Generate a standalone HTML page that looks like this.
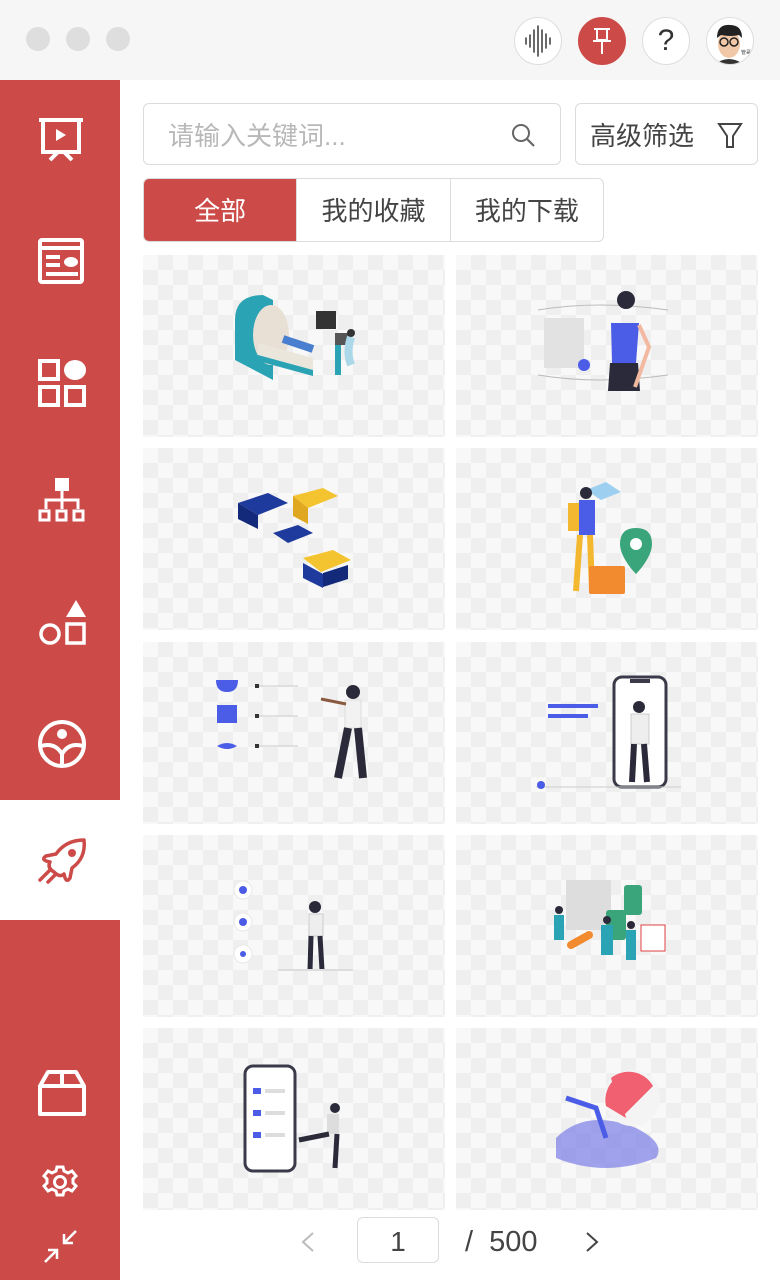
<!DOCTYPE html>
<html><head><meta charset="utf-8"><style>
*{margin:0;padding:0;box-sizing:border-box}
body{width:780px;height:1280px;background:#fff;font-family:"Liberation Sans","Noto Sans CJK SC",sans-serif;position:relative;overflow:hidden}
.top{position:absolute;left:0;top:0;width:780px;height:80px;background:#f6f6f6}
.dot{position:absolute;top:27px;width:24px;height:24px;border-radius:50%;background:#dedede}
.cb{position:absolute;top:17px;width:48px;height:48px;border-radius:50%;background:#fff;border:1px solid #ddd}
.side{position:absolute;left:0;top:80px;width:120px;height:1200px;background:#cc4b48}
.act{position:absolute;left:0;top:800px;width:120px;height:120px;background:#fff}
.ic{position:absolute;left:36px}
.search{position:absolute;left:143px;top:103px;width:418px;height:62px;border:1.5px solid #dcdcdc;border-radius:6px;color:#b8b8b8;font-size:26px;line-height:64px;padding-left:24px}
.filter{position:absolute;left:575px;top:103px;width:183px;height:62px;border:1.5px solid #dcdcdc;border-radius:6px;color:#444;font-size:26px;line-height:64px;padding-left:14px}
.tabs{position:absolute;left:143px;top:178px;width:461px;height:64px;border:1.5px solid #dcdcdc;border-radius:6px;overflow:hidden;display:flex}
.tabs div{flex:1;text-align:center;line-height:64px;font-size:26px;color:#444;border-left:1.5px solid #dcdcdc}
.tabs div:first-child{background:#cc4b48;color:#fff;border:none}
.card{position:absolute;width:302px;height:182px;background-color:#f8f8f8;background-image:linear-gradient(45deg,#efefef 25%,transparent 25%,transparent 75%,#efefef 75%),linear-gradient(45deg,#efefef 25%,transparent 25%,transparent 75%,#efefef 75%);background-size:30px 30px;background-position:0 0,15px 15px}
.card svg{position:absolute;left:0;top:0}
.pg{position:absolute;top:1222px;font-size:29px;color:#444;line-height:40px}
</style></head><body>
<div class="top">
<div class="dot" style="left:26px"></div><div class="dot" style="left:66px"></div><div class="dot" style="left:106px"></div>
<div class="cb" style="left:514px"><svg width="46" height="46"><g stroke="#444" stroke-width="1.6" stroke-linecap="round"><line x1="11" y1="20" x2="11" y2="26"/><line x1="15" y1="17" x2="15" y2="29"/><line x1="19" y1="12" x2="19" y2="34"/><line x1="23" y1="8" x2="23" y2="38"/><line x1="27" y1="12" x2="27" y2="34"/><line x1="31" y1="16" x2="31" y2="30"/><line x1="35" y1="20" x2="35" y2="26"/></g></svg></div>
<div class="cb" style="left:578px;background:#cc4b48;border-color:#cc4b48"><svg width="46" height="46"><g stroke="#fff" stroke-width="2" fill="none"><path d="M15 11h16M18 11v11h10V11M14 23h18M23 23v13"/></g></svg></div>
<div class="cb" style="left:642px;font-size:30px;color:#333;text-align:center;line-height:46px">?</div>
<div class="cb" style="left:706px;overflow:hidden"><svg width="46" height="46"><ellipse cx="22" cy="26" rx="11" ry="14" fill="#f2c9a8"/><path d="M10 20q0-14 13-13q12 0 12 13l-3-3q-8 2-18 0z" fill="#222"/><circle cx="17" cy="24" r="4" fill="none" stroke="#222" stroke-width="1.5"/><circle cx="27" cy="24" r="4" fill="none" stroke="#222" stroke-width="1.5"/><path d="M8 46q14-10 28 0z" fill="#333"/><text x="34" y="36" font-size="5" fill="#333">管哥</text></svg></div>
</div>
<div class="side"></div>
<div class="act"></div>
<svg class="ic" style="top:116px" width="50" height="52"><g stroke="#fff" stroke-width="4" fill="none"><path d="M3 4h44M7 4v32h36V4M14 44l8-8M36 44l-8-8"/></g><path d="M20 13l10 6-10 6z" fill="#fff"/></svg>
<svg class="ic" style="top:236px" width="50" height="50"><g stroke="#fff" stroke-width="4" fill="none"><rect x="4" y="4" width="42" height="42" rx="2"/><path d="M4 12h42M10 21h14M10 29h14M10 38h32"/></g><ellipse cx="35" cy="26" rx="7" ry="5" fill="#fff"/></svg>
<svg class="ic" style="top:356px" width="52" height="52"><g stroke="#fff" stroke-width="4" fill="none"><rect x="4" y="5" width="18" height="18"/><rect x="4" y="31" width="18" height="18"/><rect x="30" y="31" width="18" height="18"/></g><ellipse cx="39" cy="14" rx="11" ry="10" fill="#fff"/></svg>
<svg class="ic" style="top:476px" width="52" height="52"><rect x="19" y="2" width="14" height="13" fill="#fff"/><g stroke="#fff" stroke-width="3" fill="none"><path d="M26 15v8M10 33v-9h32v9M26 24v9"/><rect x="4" y="35" width="9" height="9"/><rect x="21" y="35" width="9" height="9"/><rect x="38" y="35" width="9" height="9"/></g></svg>
<svg class="ic" style="top:596px" width="52" height="52"><path d="M40 4l10 17H30z" fill="#fff"/><g stroke="#fff" stroke-width="3.5" fill="none"><circle cx="14" cy="38" r="9"/><rect x="31" y="28" width="17" height="19"/></g></svg>
<svg class="ic" style="top:718px" width="52" height="52"><g stroke="#fff" stroke-width="4" fill="none"><circle cx="26" cy="26" r="22"/><path d="M5 28q14-4 21 8q7-12 21-8M26 36v11"/></g><circle cx="26" cy="16" r="5" fill="#fff"/></svg>
<svg class="ic" style="top:836px" width="54" height="54"><g stroke="#cc4b48" stroke-width="3.5" fill="none" stroke-linecap="round" stroke-linejoin="round"><path d="M48 4q-18 0-28 14l-10 2q-6 4 4 6q-3 6 4 10q6 6 10 2q2 10 6 4l2-10q14-10 12-28z"/><path d="M8 40l6-6M12 46l8-8M4 44l3-3"/></g><circle cx="36" cy="17" r="4" fill="#cc4b48"/></svg>
<svg class="ic" style="top:1068px" width="52" height="52"><g stroke="#fff" stroke-width="4" fill="none" stroke-linejoin="round"><path d="M4 18l8-14h28l8 14v28H4zM4 18h44M26 4v14"/></g></svg>
<svg class="ic" style="top:1164px;left:42px" width="38" height="38"><g stroke="#fff" stroke-width="3" fill="none"><circle cx="18" cy="18" r="5.5"/><path d="M15 3h6l1 4 4 2 4-2 4 5-3 3v4l3 3-4 5-4-2-4 2-1 4h-6l-1-4-4-2-4 2-4-5 3-3v-4l-3-3 4-5 4 2 4-2z"/></g></svg>
<svg class="ic" style="top:1228px;left:42px" width="38" height="38"><g stroke="#fff" stroke-width="2.5" fill="none"><path d="M34 3L22 15M22 6v9h9M3 34l12-12M6 22h9v9"/></g></svg>

<div class="search">请输入关键词...<svg style="position:absolute;right:22px;top:18px" width="28" height="28"><circle cx="11" cy="11" r="8" stroke="#666" stroke-width="2" fill="none"/><path d="M17 17l7 7" stroke="#666" stroke-width="2.2"/></svg></div>
<div class="filter">高级筛选<svg style="position:absolute;right:14px;top:18px" width="26" height="28"><path d="M2 2h22l-8 12v11h-6V14z" stroke="#444" stroke-width="2" fill="none"/></svg></div>
<div class="tabs"><div>全部</div><div>我的收藏</div><div>我的下载</div></div>

<div class="card" style="left:143px;top:255px"><svg width="302" height="182"><path d="M92 105v-40q0-25 28-25l10 5v80z" fill="#2aa3b4"/><ellipse cx="128" cy="80" rx="18" ry="30" fill="#e8e0d5"/><path d="M115 88l55 15v12l-55-15z" fill="#eae6dc"/><path d="M140 84l30 10" stroke="#4a7fd0" stroke-width="8"/><path d="M115 100l55 15v6l-55-15z" fill="#2aa3b4"/><rect x="173" y="56" width="20" height="18" fill="#333"/><rect x="192" y="78" width="14" height="12" fill="#555"/><path d="M195 90v30" stroke="#2aa3b4" stroke-width="6"/><path d="M208 82q-5 15 0 28" stroke="#aad8e8" stroke-width="8"/><circle cx="208" cy="78" r="4" fill="#333"/></svg></div>
<div class="card" style="left:456px;top:255px"><svg width="302" height="182"><path d="M82 55q60-10 130 0M82 120q60 10 130 0" stroke="#bbb" fill="none"/><rect x="88" y="63" width="40" height="50" fill="#e2e2e2"/><circle cx="128" cy="110" r="6" fill="#4b5ce6"/><circle cx="170" cy="45" r="9" fill="#2a2a3a"/><path d="M155 68h28l-3 40h-24z" fill="#4b5ce6"/><path d="M154 108h28l2 28h-32z" fill="#2a2a3a"/><path d="M183 70l10 22-14 40" stroke="#f2b8a0" stroke-width="4" fill="none"/></svg></div>
<div class="card" style="left:143px;top:448px"><svg width="302" height="182"><path d="M95 55l30-10 20 10-30 12z" fill="#1e3a9c"/><path d="M95 55v16l20 10v-14z" fill="#13297a"/><path d="M150 48l30-8 15 8-30 12z" fill="#f4c430"/><path d="M150 48v20l15 8v-16z" fill="#e0a820"/><path d="M130 85l25-8 15 8-25 10z" fill="#1e3a9c"/><path d="M160 110l30-8 18 10-30 12z" fill="#f4c430"/><path d="M160 115v15l20 10v-14z" fill="#1e3a9c"/><path d="M180 125l25-8v14l-25 8z" fill="#13297a"/></svg></div>
<div class="card" style="left:456px;top:448px"><svg width="302" height="182"><path d="M130 42l20-8 15 10-20 8z" fill="#9dd0f0"/><path d="M180 80q-16 0-16 16c0 14 16 30 16 30s16-16 16-30q0-16-16-16z" fill="#3aa57a"/><circle cx="180" cy="96" r="6" fill="#fff"/><circle cx="130" cy="45" r="6" fill="#2a2a3a"/><rect x="112" y="55" width="14" height="28" fill="#f4b830"/><rect x="123" y="52" width="16" height="35" fill="#4b5ce6"/><path d="M124 87l-4 56M134 87l2 56" stroke="#f4b830" stroke-width="6"/><rect x="133" y="118" width="36" height="28" rx="2" fill="#f28a30"/></svg></div>
<div class="card" style="left:143px;top:642px"><svg width="302" height="182"><path d="M73 38h22q0 12-11 12t-11-12z" fill="#4b5ce6"/><rect x="74" y="63" width="20" height="18" fill="#4b5ce6"/><path d="M74 104q10-6 20 0-10 6-20 0z" fill="#4b5ce6"/><g stroke="#ccc"><line x1="115" y1="44" x2="155" y2="44"/><line x1="115" y1="74" x2="155" y2="74"/><line x1="115" y1="104" x2="155" y2="104"/></g><g fill="#333"><rect x="112" y="42" width="4" height="4"/><rect x="112" y="72" width="4" height="4"/><rect x="112" y="102" width="4" height="4"/></g><circle cx="210" cy="50" r="7" fill="#2a2a3a"/><rect x="202" y="58" width="16" height="28" fill="#f2f2f2" stroke="#ddd"/><path d="M205 86l-10 50M215 86l5 50" stroke="#2a2a3a" stroke-width="8"/><path d="M203 62l-25 -5" stroke="#8a5a40" stroke-width="3"/></svg></div>
<div class="card" style="left:456px;top:642px"><svg width="302" height="182"><rect x="158" y="35" width="52" height="110" rx="8" fill="#fff" stroke="#3a3a4a" stroke-width="3"/><rect x="174" y="37" width="20" height="4" fill="#3a3a4a"/><circle cx="183" cy="65" r="6" fill="#2a2a3a"/><rect x="175" y="72" width="18" height="30" fill="#eee" stroke="#ccc"/><path d="M178 102l-2 38M188 102l3 38" stroke="#2a2a3a" stroke-width="6"/><g fill="#4b5ce6"><rect x="92" y="62" width="50" height="4"/><rect x="92" y="72" width="40" height="4"/></g><line x1="80" y1="145" x2="225" y2="145" stroke="#ccc"/><circle cx="85" cy="143" r="4" fill="#4b5ce6"/></svg></div>
<div class="card" style="left:143px;top:835px"><svg width="302" height="182"><g fill="#fff" stroke="#e8e8e8"><circle cx="100" cy="55" r="9"/><circle cx="100" cy="87" r="9"/><circle cx="100" cy="119" r="9"/></g><g fill="#4b5ce6"><circle cx="100" cy="55" r="4"/><circle cx="100" cy="87" r="4"/><circle cx="100" cy="119" r="3"/></g><circle cx="172" cy="72" r="6" fill="#2a2a3a"/><rect x="166" y="79" width="14" height="22" fill="#eee" stroke="#ccc"/><path d="M168 101l-1 34M177 101l2 34" stroke="#2a2a3a" stroke-width="5"/><line x1="135" y1="135" x2="210" y2="135" stroke="#ddd" stroke-width="2"/></svg></div>
<div class="card" style="left:456px;top:835px"><svg width="302" height="182"><rect x="110" y="45" width="45" height="50" fill="#ddd"/><rect x="168" y="50" width="18" height="30" rx="3" fill="#3aa57a"/><rect x="150" y="75" width="20" height="30" rx="3" fill="#3aa57a"/><rect x="185" y="90" width="24" height="26" fill="#fff" stroke="#e04040"/><path d="M115 110l18-10" stroke="#f28a30" stroke-width="8" stroke-linecap="round"/><g fill="#2aa3b4"><rect x="98" y="80" width="10" height="25"/><rect x="145" y="90" width="12" height="30"/><rect x="170" y="95" width="10" height="30"/></g><g fill="#2a2a3a"><circle cx="103" cy="75" r="4"/><circle cx="151" cy="85" r="4"/><circle cx="175" cy="90" r="4"/></g></svg></div>
<div class="card" style="left:143px;top:1028px"><svg width="302" height="182"><rect x="102" y="38" width="50" height="105" rx="8" fill="#fff" stroke="#3a3a4a" stroke-width="3"/><g fill="#4b5ce6"><rect x="110" y="60" width="8" height="6"/><rect x="110" y="82" width="8" height="6"/><rect x="110" y="104" width="8" height="6"/></g><g fill="#ddd"><rect x="122" y="61" width="20" height="4"/><rect x="122" y="83" width="20" height="4"/><rect x="122" y="105" width="20" height="4"/></g><circle cx="192" cy="80" r="5" fill="#2a2a3a"/><rect x="184" y="86" width="12" height="20" fill="#ddd"/><path d="M186 106l-30 6M194 106l-2 34" stroke="#2a2a3a" stroke-width="5"/></svg></div>
<div class="card" style="left:456px;top:1028px"><svg width="302" height="182"><path d="M100 110q30-30 80-10 30 15 20 30-50 20-100 0z" fill="#7b7fe6" opacity=".7"/><circle cx="176" cy="70" r="28" fill="#f4f4f4"/><path d="M155 50a28 28 0 0 1 42 8l-30 30z" fill="#f06070"/><path d="M150 78a28 28 0 0 1 10-28l10 40z" fill="#f06070"/><path d="M110 70l30 10 10 30" stroke="#4b5ce6" stroke-width="5" fill="none"/></svg></div>

<svg style="position:absolute;left:298px;top:1230px" width="20" height="24"><path d="M15 3L5 12l10 9" stroke="#bbb" stroke-width="2" fill="none"/></svg>
<div style="position:absolute;left:357px;top:1217px;width:82px;height:46px;border:1.5px solid #dcdcdc;border-radius:6px;text-align:center;line-height:48px;font-size:28px;color:#444">1</div>
<div class="pg" style="left:465px">/&nbsp;&nbsp;500</div>
<svg style="position:absolute;left:582px;top:1230px" width="20" height="24"><path d="M5 3l10 9-10 9" stroke="#444" stroke-width="2" fill="none"/></svg>
</body></html>
